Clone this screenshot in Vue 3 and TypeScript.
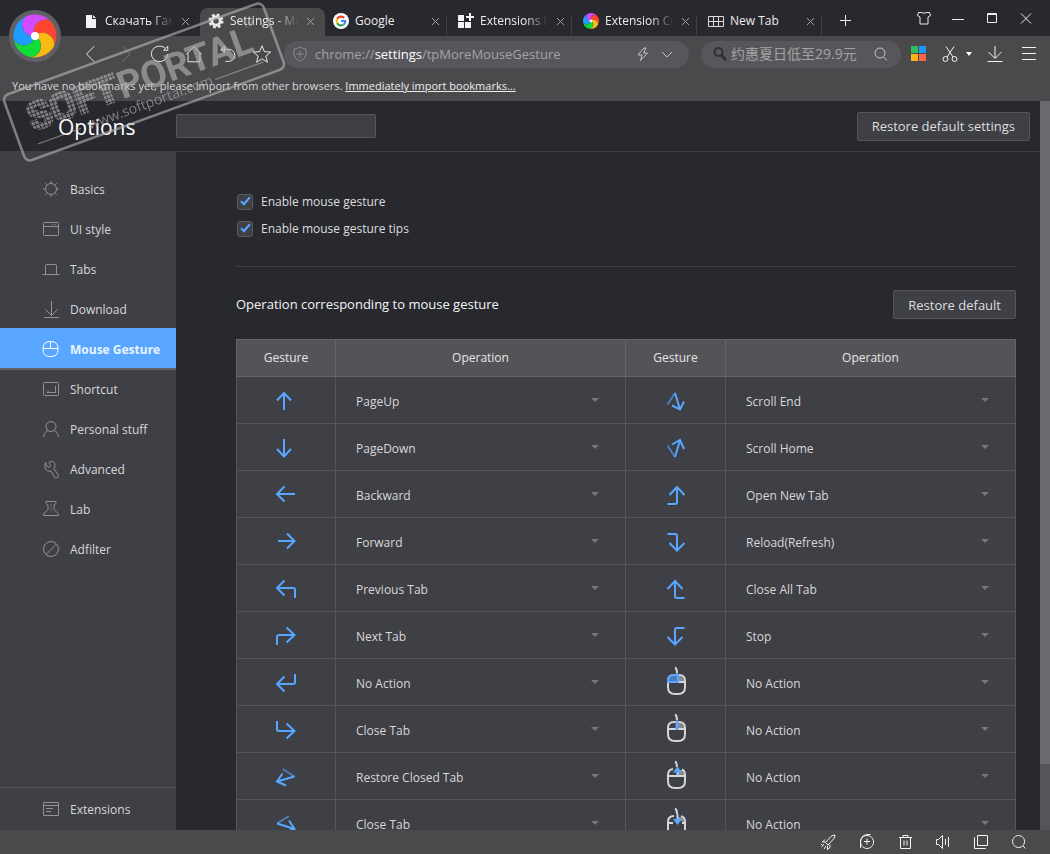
<script setup lang="ts">
import { ref } from 'vue'

interface Stroke { d: string; dim?: boolean }
interface Gesture { icon: string; action: string }

const tabs = [
  { title: 'Скачать Гам', icon: 'page', fade: true },
  { title: 'Settings - Mo', icon: 'gear', fade: true, active: true },
  { title: 'Google', icon: 'google' },
  { title: 'Extensions In', icon: 'ext', fade: true },
  { title: 'Extension Ce', icon: 'swirl', fade: true },
  { title: 'New Tab', icon: 'grid' },
]

const petals = [
  { angle: -117, color: '#d34bff' },
  { angle: -45, color: '#ff4432' },
  { angle: 27, color: '#fbb914' },
  { angle: 99, color: '#12dc38' },
  { angle: 171, color: '#1f9dff' },
]

const toolbar = [
  { label: 'Back', d: 'M14.500 3.500L6 12l8.500 8.500' },
  { label: 'Forward', d: 'M8.500 4L16.500 12l-8 8', off: true },
  { label: 'Reload', d: 'M20.500 12A9 8.500 0 1 1 17.500 5.500M20.500 3.500V8h-4.500z' },
  { label: 'Home', d: 'M3.500 12.500L12 4l8.500 8.500M5.500 11V20.500h13V11' },
  { label: 'Undo', d: 'M8 3.500L4 7.500l4 2.500zM5 7h8a6.500 6.500 0 0 1 0 13H9' },
  { label: 'Favorite', d: 'M12 3l2.600 6.400 6.900.5-5.300 4.400 1.700 6.700L12 17.300 6.100 21l1.700-6.700L2.500 9.900l6.900-.5z' },
]

const nav = [
  { label: 'Basics', d: 'M9 3.500a5.500 5.500 0 1 0 0 11a5.500 5.500 0 1 0 0-11M9 1v2M9 15v2M1 9h2M15 9h2M3.300 3.300l1.400 1.400M13.300 13.300l1.400 1.400M3.300 14.700l1.400-1.400M13.300 4.700l1.400-1.400' },
  { label: 'UI style', d: 'M2.500 2.500h13q1 0 1 1v11q0 1-1 1h-13q-1 0-1-1v-11q0-1 1-1zM1.500 6.500h15M10 4.500h1M12.500 4.500h1' },
  { label: 'Tabs', d: 'M.5 14.500h17M3.500 14.500v-9q0-1 1-1h9q1 0 1 1v9' },
  { label: 'Download', d: 'M9.500 1v14M3.500 9.500l6 6 6-6M2 17.500h15' },
  { label: 'Mouse Gesture', d: 'M8 1.500h1q7 0 7 7v1q0 7-7 7h-1q-7 0-7-7v-1q0-7 7-7zM1 8.500h15M8.500 1.500v7' },
  { label: 'Shortcut', d: 'M2.500 2.500h13q1 0 1 1v11q0 1-1 1h-13q-1 0-1-1v-11q0-1 1-1zM13.500 6v6.500h-8M7 10.500l-2 2h2' },
  { label: 'Personal stuff', d: 'M9 1.500a4.500 4.500 0 1 0 0 10a4.500 4.500 0 1 0 0-10M1.500 17q1-6 5-6.500M11.500 10.500q4 .5 5 6.500' },
  { label: 'Advanced', d: 'M8 1.500q5-.5 5 4q0 2-1 3l4.500 7q0 2-2 2.500q-1.500 0-2-1L9 11q-4.500 1-6-3q-.8-3 .7-5.500l1 4 2.300 1 1.500-1.800L7 2.500z' },
  { label: 'Lab', d: 'M4 1.500h10v2l-2 1.500v4.500L16.500 14v1.500h-15V14L6 9.500V5L4 3.500zM9 4v1M9 6.500v1M9 9v1M9 11.500v1' },
  { label: 'Adfilter', d: 'M9 1.500a7.500 7.500 0 1 0 0 15a7.500 7.500 0 1 0 0-15M4 14.500L14.500 4' },
]
const current = ref('Mouse Gesture')

const strokes: Record<string, Stroke[]> = {
  up: [{ d: 'M10 5V22M3 12.500L10 5l7 7.500' }],
  down: [{ d: 'M10 4V22M3 14l7 7.500L17 14' }],
  left: [{ d: 'M3 12H21M10.500 4.500L3 12l7.500 7.500' }],
  right: [{ d: 'M4 12H21M13 4.500L20.500 12L13 19.500' }],
  downLeft: [{ d: 'M3 12H19Q21 12 21 14V22M10.500 4.500L3 12l7.500 7.500' }],
  upRight: [{ d: 'M3 22V14Q3 12 5 12H20M12.500 4.500L20.500 12l-8 7.500' }],
  enter: [{ d: 'M21 4V12Q21 14 19 14H3M10.500 6.500L3 14l7.500 7.500' }],
  downRight: [{ d: 'M3 4V12Q3 14 5 14H20M12.500 6.500L20.500 14l-8 7.500' }],
  zigLeft: [{ d: 'M8.500 5L20.500 12.500', dim: true }, { d: 'M20.500 12.500L3 17.500M8.500 9.500L3 17.500L12 21.500' }],
  zigRight: [{ d: 'M15 5L3 12.500', dim: true }, { d: 'M3 12.500L20.500 18M15 9.500L20.500 18L11 21.500' }],
  zigDown: [{ d: 'M3.500 16.500L11 5', dim: true }, { d: 'M11 5L16 21.500M8 17.500L16 21.500L20 13.500' }],
  zigUp: [{ d: 'M3.500 10.500L11 22', dim: true }, { d: 'M11 22L16 5M8 9.500L16 5L20 14' }],
  rightUp: [{ d: 'M13 5V20Q13 22 11 22H3.500M5.500 13L13 5l7.500 8' }],
  rightDown: [{ d: 'M3.500 5H11Q13 5 13 7V22M5.500 14L13 21.500L20.500 14' }],
  leftUp: [{ d: 'M11 5V20Q11 22 13 22H20.500M3.500 13L11 5l7.500 8' }],
  leftDown: [{ d: 'M20.500 5H13Q11 5 11 7V21.500M3.500 14L11 21.500L18.500 14' }],
}

const g = (icon: string, action: string): Gesture => ({ icon, action })
const rows: [Gesture, Gesture][] = [
  [g('up', 'PageUp'), g('zigDown', 'Scroll End')],
  [g('down', 'PageDown'), g('zigUp', 'Scroll Home')],
  [g('left', 'Backward'), g('rightUp', 'Open New Tab')],
  [g('right', 'Forward'), g('rightDown', 'Reload(Refresh)')],
  [g('downLeft', 'Previous Tab'), g('leftUp', 'Close All Tab')],
  [g('upRight', 'Next Tab'), g('leftDown', 'Stop')],
  [g('enter', 'No Action'), g('mouseLeft', 'No Action')],
  [g('downRight', 'Close Tab'), g('mouseMiddle', 'No Action')],
  [g('zigLeft', 'Restore Closed Tab'), g('mouseUp', 'No Action')],
  [g('zigRight', 'Close Tab'), g('mouseDown', 'No Action')],
]

const status = [
  { label: 'Speed up', d: 'M5.500 9.500L11 3.500q2-1.500 4-1.500q0 2-1.500 4L8 12zM5 6.500L2.500 9h3M10 11.500v3l-2.500 2v-4M4 11l-2.500 3M6 13l-2 3M2 11l-1 1' },
  { label: 'Booster', d: 'M9 2.500a6.500 6.500 0 1 0 .1 0M9 5.500v6M6 8.500h6M2.500 15V9q0-6 6-7.500h4' },
  { label: 'Clear', d: 'M3 4.500h13M7 4.500v-2h5v2M4.500 4.500v11h10v-11M8 7.500v5M11 7.500v5' },
  { label: 'Sound', d: 'M2.500 6.500h2l4-4v13l-4-4h-2zM11.500 6v6M14.500 4v10' },
  { label: 'Windows', d: 'M5.500 2.500h10v10h-10zM3 4.500h-.5v11h11v-.5' },
  { label: 'Zoom', d: 'M8.500 2.500a6 6 0 1 0 .1 0M13 13l2.500 2.500' },
]

const gestureOn = ref(true)
const tipsOn = ref(true)
const address = ref('')
</script>

<template>
  <div class="browser">
    <header class="chrome">
      <button class="logo" aria-label="Browser menu">
        <svg viewBox="-26 -26 52 52">
          <circle r="26" fill="#606065" />
          <path v-for="p in petals" :key="p.color" :fill="p.color" :transform="`rotate(${p.angle})`"
            d="M0 0A11.500 11.500 0 0 1 21.500 0A22 22 0 0 1 6.800 20.500A11.500 11.500 0 0 0 0 0" />
          <circle r="4" fill="#fff" />
        </svg>
      </button>

      <div class="strip">
        <div class="tabs">
          <div v-for="t in tabs" :key="t.title" class="tab" :class="{ active: t.active }">
            <svg class="fav" viewBox="0 0 16 16">
              <path v-if="t.icon === 'page'" fill="#f2f2f2" d="M3 2h6v4h4v9H3zM10 2l3 3h-3z" />
              <g v-else-if="t.icon === 'gear'" fill="none" stroke="#e9e9e9">
                <circle cx="8" cy="8" r="4.200" stroke-width="3" />
                <circle cx="8" cy="8" r="6.300" stroke-width="2.500" stroke-dasharray="2.700 2.248" />
              </g>
              <g v-else-if="t.icon === 'google'">
                <circle cx="8" cy="8" r="8" fill="#fff" />
                <g fill="none" stroke-width="2.200">
                  <path stroke="#ea4335" d="M4.200 5.800A4.400 4.400 0 0 1 11.200 5" />
                  <path stroke="#fbbc05" d="M4.200 5.800A4.400 4.400 0 0 0 4.200 10.200" />
                  <path stroke="#34a853" d="M4.200 10.200A4.400 4.400 0 0 0 10.700 11.500" />
                  <path stroke="#4285f4" d="M10.700 11.500Q12.400 10.200 12.300 8H8" />
                </g>
              </g>
              <path v-else-if="t.icon === 'ext'" fill="#f2f2f2"
                d="M0 2h6v6H0zM0 9h6v6H0zM7 9h6v6h-6zM11 0h2v3h3v2h-3v3h-2V5H8V3h3z" />
              <g v-else-if="t.icon === 'swirl'" transform="translate(8 8) scale(.37)">
                <path v-for="p in petals" :key="p.color" :fill="p.color" :transform="`rotate(${p.angle})`"
                  d="M0 0A11.500 11.500 0 0 1 21.500 0A22 22 0 0 1 6.800 20.500A11.500 11.500 0 0 0 0 0" />
                <circle r="4" fill="#fff" />
              </g>
              <path v-else fill="none" stroke="#dcdcdc" d="M.5 3.500h15v10H.5zM.5 8.500h15M5.500 3.500v10M10.500 3.500v10" />
            </svg>
            <span class="title" :class="{ fade: t.fade }">{{ t.title }}</span>
            <button class="close" aria-label="Close tab">
              <svg viewBox="0 0 9 9"><path d="M1 1l7 7M8 1l-7 7" /></svg>
            </button>
          </div>
          <button class="ico plus" aria-label="Open new tab">
            <svg viewBox="0 0 14 14"><path d="M7.500 2v11M2 7.500h11" /></svg>
          </button>
        </div>
        <div class="window">
          <button class="ico" aria-label="Skins"><svg viewBox="0 0 14 14"><path d="M4.500 1.500q2.500 1.500 5 0h3l1 3-2.500 1.500v7H3V6L.5 4.500l1-3z" /></svg></button>
          <button class="ico" aria-label="Minimize"><svg viewBox="0 0 14 14"><path d="M1 8.500h12" /></svg></button>
          <button class="ico" aria-label="Maximize"><svg viewBox="0 0 14 14"><path d="M2.500 2.500h9v9h-9zM2.500 3.500h9" /></svg></button>
          <button class="ico" aria-label="Close"><svg viewBox="0 0 14 14"><path d="M2 2.500l10 10M12 2.500l-10 10" /></svg></button>
        </div>
      </div>

      <div class="toolbar">
        <div class="navs">
          <button v-for="b in toolbar" :key="b.label" class="ico" :class="{ off: b.off }" :aria-label="b.label">
            <svg viewBox="0 0 24 24"><path :d="b.d" /></svg>
          </button>
        </div>
        <div class="pill address">
          <svg class="shield" viewBox="0 0 14 16"><path d="M7 1q3 2 6 2v6q-1 4-6 6.500Q2 13 1 9V3q3 0 6-2zM7 4.500v7M3.500 8h7" /></svg>
          <div class="url">
            <span>chrome://<b>settings</b>/tpMoreMouseGesture</span>
            <input v-model="address" type="text" aria-label="Address">
          </div>
          <button class="ico" aria-label="Fast mode"><svg viewBox="0 0 14 14"><path d="M8 1L2 8h4l-1.500 5.500L11.500 6H7.500L10 1z" /></svg></button>
          <button class="ico" aria-label="Address history"><svg viewBox="0 0 14 14"><path d="M2 5l5 5 5-5" /></svg></button>
        </div>
        <div class="pill search">
          <svg class="glass" viewBox="0 0 14 14"><circle cx="5.500" cy="5" r="4" /><path d="M8.500 8.500L13 13" stroke-width="3" /></svg>
          <input type="text" placeholder="约惠夏日低至29.9元" aria-label="Search">
          <button class="ico" aria-label="Search the web"><svg viewBox="0 0 14 14"><circle cx="6" cy="6" r="5" /><path d="M9.500 10L13 13.500" /></svg></button>
        </div>
        <div class="tools">
          <button class="ico" aria-label="Apps">
            <svg viewBox="0 0 16 16" class="squares"><path fill="#2ebd59" d="M0 0h7v7H0z" /><path fill="#1b9bf7" d="M8 0h7v7H8z" /><path fill="#fbb316" d="M0 8h7v7H0z" /><path fill="#ff6444" d="M8 8h7v7H8z" /></svg>
          </button>
          <button class="ico cut" aria-label="Screenshot">
            <svg viewBox="0 0 16 16"><path d="M4 .5l7 10.500M12 .5L5 11" /><circle cx="3.500" cy="13" r="2.500" /><circle cx="12.500" cy="13" r="2.500" /></svg>
            <svg viewBox="0 0 6 4" class="caret"><path d="M0 0h6L3 4z" /></svg>
          </button>
          <button class="ico" aria-label="Downloads"><svg viewBox="0 0 16 16"><path d="M8 0v12M1.500 6L8 12.500 14.500 6M.5 15.500h15" /></svg></button>
          <button class="ico" aria-label="Menu"><svg viewBox="0 0 16 16"><path d="M1 1.500h14M1 7.500h14M1 13.500h14" /></svg></button>
        </div>
      </div>

      <p class="bookmarks">You have no bookmarks yet, please import from other browsers. <a href="#import">Immediately import bookmarks...</a></p>
    </header>

    <div class="viewport">
      <div class="page">
        <div class="head">
          <h1>Options</h1>
          <input type="text" class="filter" aria-label="Search options">
          <button class="btn">Restore default settings</button>
        </div>
        <div class="body">
          <nav class="side">
            <a v-for="n in nav" :key="n.label" href="#options" :class="{ on: current === n.label }" @click.prevent="current = n.label">
              <svg viewBox="0 0 18 18"><path :d="n.d" /></svg><span>{{ n.label }}</span>
            </a>
            <a href="#extensions" class="ext">
              <svg viewBox="0 0 18 18"><path d="M1.500 2.500h15v13h-15zM1.500 5.500h15M4 8.500h7M4 11.500h5" /></svg><span>Extensions</span>
            </a>
          </nav>

          <main>
            <label class="check"><input v-model="gestureOn" type="checkbox">Enable mouse gesture</label>
            <label class="check"><input v-model="tipsOn" type="checkbox">Enable mouse gesture tips</label>
            <hr>
            <div class="section">
              <h2>Operation corresponding to mouse gesture</h2>
              <button class="btn">Restore default</button>
            </div>
            <table>
              <colgroup><col class="first"><col><col class="narrow"><col></colgroup>
              <thead>
                <tr><th>Gesture</th><th>Operation</th><th>Gesture</th><th>Operation</th></tr>
              </thead>
              <tbody>
                <tr v-for="(row, i) in rows" :key="i">
                  <template v-for="(item, j) in row" :key="j">
                    <td>
                      <svg class="gesture" viewBox="0 0 24 24">
                        <template v-if="strokes[item.icon]">
                          <path v-for="s in strokes[item.icon]" :key="s.d" :d="s.d" :class="{ dim: s.dim }" />
                        </template>
                        <g v-else class="mouse">
                          <path class="shade" d="M13 5q7 0 7 7h-7z" />
                          <path d="M11 -2.500q2 1 2 6" />
                          <path d="M10 5h5q6 0 6 6v6q0 7-7 7h-3q-7 0-7-7v-6q0-6 6-6zM4 12h17" />
                          <path v-if="item.icon === 'mouseLeft'" class="press" d="M4 12v-1q0-6 6-6h4v7z" />
                          <path v-if="item.icon === 'mouseMiddle'" class="wheel" d="M13 4v9" />
                          <template v-if="item.icon === 'mouseUp'">
                            <path class="gap" d="M9 4.500h9" /><path class="tail" d="M13.500 8v5" /><path class="tip" d="M13.500 2.500l4.500 6H9z" />
                          </template>
                          <template v-if="item.icon === 'mouseDown'">
                            <path class="gap" d="M10 4.500h7M9 11.500h9" /><path class="tail" d="M13.500 3v6" /><path class="tip" d="M13.500 14L18 8H9z" />
                          </template>
                        </g>
                      </svg>
                    </td>
                    <td>
                      <div class="pick">
                        <select :aria-label="`Operation ${i + 1}-${j + 1}`"><option>{{ item.action }}</option></select>
                        <svg viewBox="0 0 8 4"><path d="M0 0h8L4 4z" /></svg>
                      </div>
                    </td>
                  </template>
                </tr>
              </tbody>
            </table>
          </main>
        </div>
      </div>
      <div class="scroll"><div class="thumb" /></div>
    </div>

    <footer class="status">
      <button v-for="s in status" :key="s.label" class="ico" :aria-label="s.label">
        <svg viewBox="0 0 18 18"><path :d="s.d" /></svg>
      </button>
    </footer>

    <svg class="stamp" viewBox="0 0 290 170">
      <defs>
        <pattern id="dots" width="4" height="4" patternUnits="userSpaceOnUse"><rect width="3" height="3" fill="#b4b4b6" /></pattern>
      </defs>
      <g transform="translate(144 82) rotate(-20)">
        <rect x="-138" y="-35" width="276" height="70" rx="6" fill="none" stroke="#b4b4b6" stroke-width="2.500" />
        <text class="word dotted" x="-121" y="8">SOFT</text>
        <text class="word" x="-26" y="9">PORTAL</text>
        <text class="tm" x="113" y="-16">TM</text>
        <text class="site" x="-1" y="26">www.softportal.com</text>
        <path d="M-121 22h46M68 22h51" stroke="#b4b4b6" />
      </g>
    </svg>
  </div>
</template>

<style>
body { margin: 0; background: #28282f; }
</style>

<style scoped>
.browser { position: relative; display: flex; flex-direction: column; height: 100vh; overflow: hidden; color: #d8d8d8; background: #28282f; font: 12px/16px "Open Sans", "Noto Sans", "Noto Sans CJK SC", sans-serif; }
button, input, select { font: inherit; color: inherit; background: none; border: 0; padding: 0; margin: 0; outline: 0; }
svg { display: block; flex: none; fill: none; stroke: currentColor; overflow: visible; }
.ico { display: flex; align-items: center; justify-content: center; flex: none; }
.chrome { position: relative; flex: none; background: #4a4a4d; }
.logo { position: absolute; left: 9px; top: 10px; width: 52px; height: 52px; }
.logo svg, .fav { stroke: none; }

.strip { display: flex; justify-content: space-between; height: 36px; padding-left: 75px; background: #28282f; }
.tabs { display: flex; align-items: flex-end; }
.tab { position: relative; display: flex; align-items: center; gap: 6px; box-sizing: border-box; width: 125px; height: 28px; padding: 0 10px 2px 8px; }
.tab.active { background: #4a4a4d; border-radius: 8px 8px 0 0; }
.tab:nth-child(n+3)::after { content: ""; position: absolute; right: 3px; top: 8px; width: 1px; height: 20px; background: #3f3f45; }
.fav { width: 16px; height: 16px; }
.title { flex: 1; white-space: nowrap; color: #ececec; min-width: 0; }
.title.fade { mask-image: linear-gradient(90deg, #000 65%, transparent 98%); }
.close svg { width: 9px; height: 9px; color: #a0a0a3; }
.plus { width: 40px; height: 32px; }
.plus svg, .window svg { width: 14px; height: 14px; color: #ececec; }
.window { display: flex; padding-right: 7px; }
.window .ico { width: 34px; }

.toolbar { display: flex; align-items: center; height: 36px; padding: 0 13px 0 75px; color: #f4f4f4; }
.navs { display: flex; }
.navs .ico { width: 34px; height: 34px; }
.navs svg { width: 22px; height: 22px; }
.off { color: #7b7b7e; }
.pill { display: flex; align-items: center; box-sizing: border-box; height: 27px; border-radius: 14px; background: #57575b; color: #a3a3a6; font-size: 14px; line-height: 20px; }
.address { flex: 1; margin: 0 12px 0 5px; padding: 0 14px 0 9px; gap: 8px; }
.pill .ico { width: 16px; }
.pill .ico svg { width: 14px; height: 14px; color: #c4c4c6; }
.shield { width: 14px; height: 16px; color: #88888c; }
.url { position: relative; flex: 1; font-size: 13px; white-space: nowrap; }
.url b { font-weight: 400; color: #fff; }
.url input { position: absolute; inset: 0; width: 100%; }
.search { width: 200px; padding: 0 12px; gap: 4px; }
.search input { flex: 1; min-width: 0; }
.search input::placeholder { color: #a3a3a6; opacity: 1; }
.glass { width: 14px; height: 14px; color: #303034; stroke-width: 2; }
.tools { display: flex; align-items: center; gap: 15px; margin-left: 10px; }
.tools svg { width: 16px; height: 16px; }
.tools .squares { stroke: none; }
.cut { gap: 8px; }
.tools .caret { width: 6px; height: 4px; fill: #fff; stroke: none; }
.tools .ico:last-child { margin-left: 3px; }
.bookmarks { margin: 0; padding: 6px 12px 7px; font-size: 11px; white-space: nowrap; }
.bookmarks a { color: #ececec; }

.viewport { display: flex; flex: 1; min-height: 0; }
.page { display: flex; flex-direction: column; flex: 1; min-width: 0; }
.scroll { width: 10px; background: #545459; }
.thumb { height: 91%; background: #6a6a6e; }
.head { display: flex; align-items: center; flex: none; box-sizing: border-box; height: 51px; padding: 0 10px 0 58px; border-bottom: 1px solid #3e3e45; }
h1 { width: 118px; margin: 0; padding-top: 2px; font-size: 21px; line-height: 28px; font-weight: 400; color: #fff; }
.filter { box-sizing: border-box; width: 200px; height: 24px; margin-right: auto; background: #3f3f46; border: 1px solid #55555a; border-radius: 2px; }
.btn { height: 29px; padding: 0 14px; background: #3f3f46; border: 1px solid #55555a; border-radius: 2px; font-size: 13px; color: #dedede; white-space: nowrap; }
.body { display: flex; flex: 1; min-height: 0; }
.side { display: flex; flex-direction: column; flex: none; width: 176px; padding-top: 16px; box-sizing: border-box; background: #3f3f46; }
.side a { display: flex; align-items: center; gap: 10px; height: 40px; padding: 2px 0 0 42px; box-sizing: border-box; color: #d8d8d8; text-decoration: none; white-space: nowrap; }
.side span { padding-top: 2px; }
.side svg { width: 18px; height: 18px; color: #929296; }
.side .on { background: #58a6ff; color: #e8f3ff; font-weight: 700; box-shadow: 0 2px #606065; }
.side .on svg { color: #fff; }
.side .ext { height: 43px; margin-top: auto; padding-top: 0; border-top: 1px solid #55555a; }

main { flex: 1; min-width: 0; padding: 36px 24px 0 60px; overflow: hidden; }
.check { display: flex; align-items: center; gap: 8px; height: 27px; padding-left: 1px; color: #dedede; }
.check input { appearance: none; display: grid; place-items: center; box-sizing: border-box; width: 16px; height: 16px; background: #3f3f46; border: 1px solid #5a5a60; border-radius: 3px; }
.check input:checked::after { content: ""; width: 3px; height: 8px; margin-top: -3px; border: solid #58a6ff; border-width: 0 2px 2px 0; transform: rotate(42deg); }
hr { height: 1px; margin: 24px 0 23px; border: 0; background: #3e3e45; }
.section { display: flex; align-items: center; justify-content: space-between; margin-bottom: 20px; }
h2 { margin: 0; padding-bottom: 2px; font-size: 13px; font-weight: 400; color: #f4f4f4; }
table { width: 100%; table-layout: fixed; border-collapse: collapse; background: #3f3f46; }
.first { width: 99px; }
.narrow { width: 100px; }
th, td { padding: 0; border: 1px solid #55555a; }
th { height: 36px; font-weight: 400; color: #e6e6e6; background: #545458; border-color: #66666a; }
td { height: 46px; }
.gesture { width: 24px; height: 24px; margin: 0 auto; color: #58a6ff; stroke-width: 2; }
.dim { opacity: .6; }
.mouse { stroke: #d6d6d6; }
.shade { fill: #88888c; stroke: none; }
.press { fill: #4e7fb8; stroke: #58a6ff; }
.wheel { stroke: #58a6ff; stroke-width: 3; }
.gap { stroke: #3f3f46; stroke-width: 3; }
.tail { stroke: #a8d0ff; }
.tip { fill: #58a6ff; stroke: none; }
.pick { display: flex; align-items: center; padding: 0 26px 0 20px; }
.pick select { flex: 1; appearance: none; box-sizing: border-box; height: 32px; padding-top: 4px; }
.pick svg { width: 8px; height: 4px; fill: #77777b; stroke: none; }
.status { display: flex; align-items: center; justify-content: flex-end; gap: 20px; flex: none; height: 24px; padding-right: 22px; background: #4a4a4d; color: #f4f4f4; }
.status svg { width: 18px; height: 18px; }

.stamp { position: absolute; left: 0; top: 0; width: 290px; height: 170px; opacity: .62; pointer-events: none; stroke: none; }
.stamp text { fill: #b4b4b6; }
.word { font: 700 38px Roboto, sans-serif; }
.stamp .dotted { fill: url(#dots); stroke: url(#dots); stroke-width: 3; }
.tm { font: 7px Roboto, sans-serif; }
.site { font-size: 14px; text-anchor: middle; }
</style>
